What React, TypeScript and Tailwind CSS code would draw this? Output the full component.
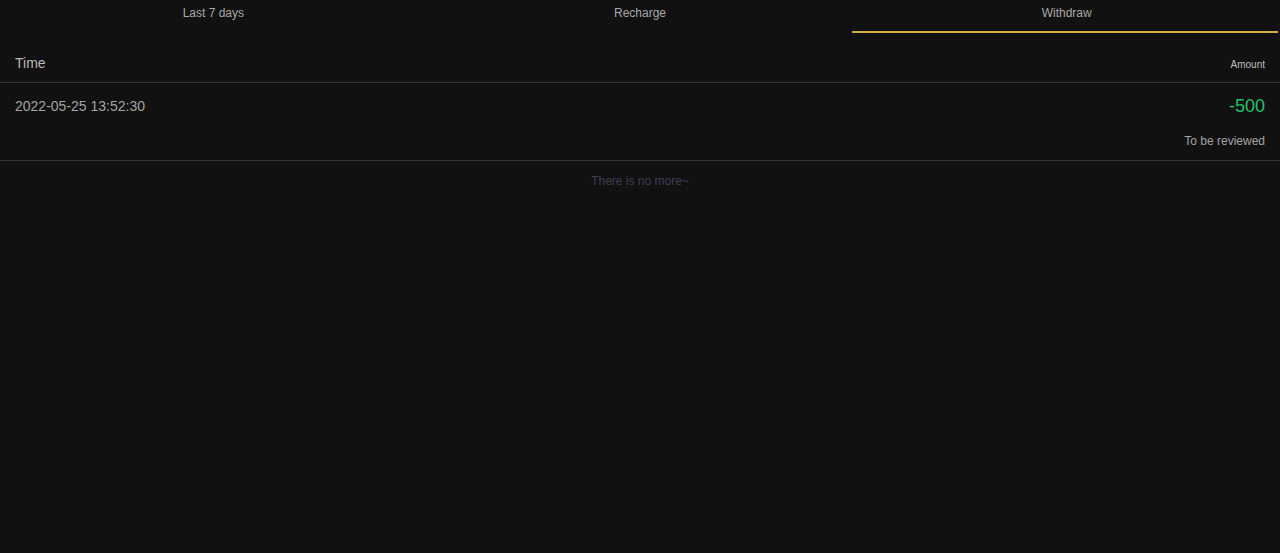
import { useState } from 'react';

const tabs = ['Last 7 days', 'Recharge', 'Withdraw'];

const App = () => {
  const [active, setActive] = useState(2);

  return (
    <div className="min-h-[553px] w-full bg-[#111111] font-['Liberation_Sans',Arial,sans-serif]">
      {/* Tabs */}
      <div className="grid grid-cols-3 h-[34px]">
        {tabs.map((t, i) => (
          <div
            key={t}
            onClick={() => setActive(i)}
            className="relative cursor-pointer text-center text-[12px] leading-[26px] text-[#a8a8a8]"
          >
            {t}
            {active === i && (
              <div className="absolute left-[-1px] right-[2px] top-[31px] h-[2px] bg-[#d8ab3e]" />
            )}
          </div>
        ))}
      </div>

      {/* Header */}
      <div className="flex justify-between items-end px-[15px] pt-[20px] pb-[10px] border-b border-[#333333]">
        <span className="text-[14px] leading-[18px] text-[#b8b8b8]">Time</span>
        <span className="text-[10px] leading-[14px] text-[#bdbdbd]">Amount</span>
      </div>

      {/* Record */}
      <div className="px-[15px] pt-[13px] pb-[11px] border-b border-[#333333]">
        <div className="flex justify-between items-center h-[20px]">
          <span className="text-[14px] text-[#a3a3a3]">2022-05-25 13:52:30</span>
          <span className="text-[18px] text-[#22c06b]">-500</span>
        </div>
        <div className="mt-[17px] text-right text-[12px] leading-[16px] text-[#a3a3a3]">To be reviewed</div>
      </div>

      <div className="pt-[12px] text-center text-[12px] leading-[16px] text-[#3e3e56]">There is no more~</div>
    </div>
  );
};

export default App;
